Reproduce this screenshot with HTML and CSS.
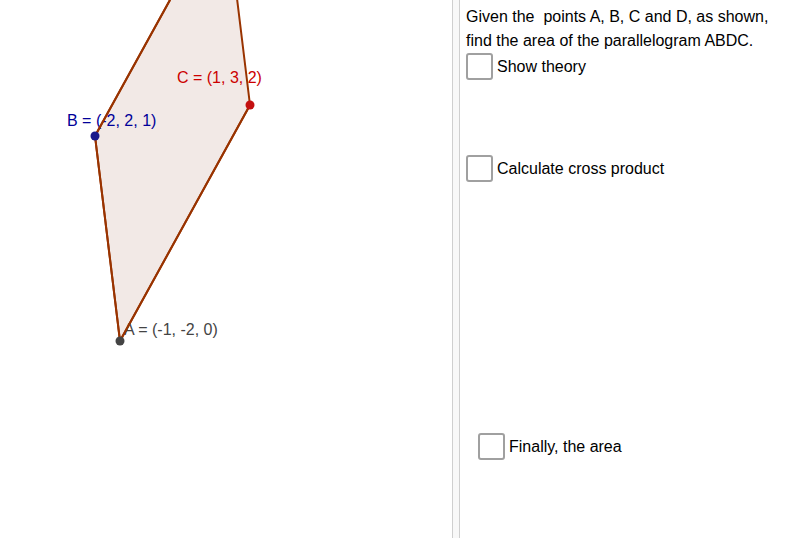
FILE: index.html
```html
<!DOCTYPE html>
<html>
<head>
<meta charset="utf-8">
<link rel="stylesheet" href="styles.css">
</head>
<body>
<div class="app">
  <div class="graphics">
    <svg width="452" height="538" viewBox="0 0 452 538" xmlns="http://www.w3.org/2000/svg">
      <polygon points="120,341 95,136 225,-100 250,105" fill="#f2e9e6" stroke="#993300" stroke-width="2" stroke-linejoin="round"/>
      <text x="177" y="83" class="lbl lbl-c">C = (1, 3, 2)</text>
      <text x="67" y="126" class="lbl lbl-b">B = (-2, 2, 1)</text>
      <text x="124" y="335" class="lbl lbl-a">A = (-1, -2, 0)</text>
      <line x1="120" y1="341" x2="95" y2="136" stroke="#993300" stroke-width="2"/>
      <line x1="95" y1="136" x2="170" y2="0" stroke="#993300" stroke-width="2"/>
      <line x1="120" y1="341" x2="250" y2="105" stroke="#993300" stroke-width="2"/>
      <circle cx="95" cy="136" r="4.5" fill="#1a1a8c"/>
      <circle cx="250" cy="105" r="4.5" fill="#c41010"/>
      <circle cx="120" cy="341" r="4.5" fill="#444444"/>
    </svg>
  </div>
  <div class="divider"></div>
  <div class="panel">
    <p class="intro">Given the &nbsp;points A, B, C and D, as shown,<br>find the area of the parallelogram ABDC.</p>
    <label class="row row-1"><span class="box"></span><span class="txt">Show theory</span></label>
    <label class="row row-2"><span class="box"></span><span class="txt">Calculate cross product</span></label>
    <label class="row row-3"><span class="box"></span><span class="txt">Finally, the area</span></label>
  </div>
</div>
</body>
</html>
```
FILE: styles.css
```css
html, body {
  margin: 0;
  padding: 0;
  background: #ffffff;
  overflow: hidden;
}
.app {
  display: flex;
  width: 798px;
  height: 538px;
  font-family: "Liberation Sans", Arial, sans-serif;
}
.graphics {
  width: 452px;
  height: 538px;
  flex: none;
}
.graphics svg {
  display: block;
}
.lbl {
  font-family: "Liberation Sans", Arial, sans-serif;
  font-size: 16px;
}
.lbl-c { fill: #cc0000; }
.lbl-b { fill: #000099; }
.lbl-a { fill: #444444; }
.divider {
  width: 6px;
  flex: none;
  background: #f8f8f8;
  border-left: 1px solid #cfcfcf;
  border-right: 1px solid #cfcfcf;
}
.panel {
  flex: 1;
  padding-left: 6px;
  display: flex;
  flex-direction: column;
  align-items: flex-start;
  color: #000;
  font-size: 16px;
}
.intro {
  margin: 5px 0 0 0;
  line-height: 24px;
}
.row {
  display: flex;
  align-items: center;
  gap: 4px;
}
.row-1 { margin-top: 0; }
.row-2 { margin-top: 75px; }
.row-3 { margin-top: 251px; margin-left: 12px; }
.box {
  width: 23px;
  height: 23px;
  border: 2px solid #a0a0a0;
  border-radius: 3px;
  background: #fff;
  box-sizing: content-box;
}
.txt {
  line-height: 27px;
}
```
